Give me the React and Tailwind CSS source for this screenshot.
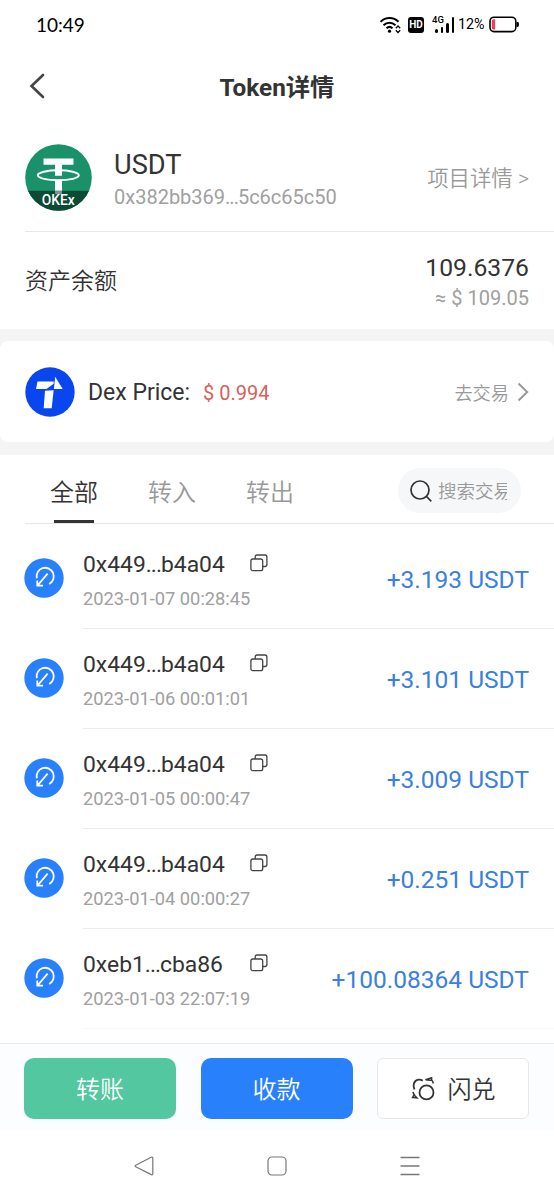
import clsx from 'clsx';

const tabs = ['全部', '转入', '转出'];

const transactions = [
  { hash: ['0x449', 'b4a04'], time: '2023-01-07 00:28:45', amount: '+3.193 USDT' },
  { hash: ['0x449', 'b4a04'], time: '2023-01-06 00:01:01', amount: '+3.101 USDT' },
  { hash: ['0x449', 'b4a04'], time: '2023-01-05 00:00:47', amount: '+3.009 USDT' },
  { hash: ['0x449', 'b4a04'], time: '2023-01-04 00:00:27', amount: '+0.251 USDT' },
  { hash: ['0xeb1', 'cba86'], time: '2023-01-03 22:07:19', amount: '+100.08364 USDT' },
];

function StatusBar() {
  return (
    <div className="flex h-[50px] items-center justify-between pl-9 pr-[35px] text-black">
      <span className="font-[Lato] text-[19px] leading-6 -mt-px">10:49</span>
      <div className="-mt-px flex items-center">
        {/* Wifi */}
        <svg className="-ml-0.5" width="21" height="18" viewBox="0 0 21 18" fill="none" stroke="currentColor" strokeWidth="2">
          <path d="M.5 5.8C5.500.8 13.500.8 18.500 5.800" />
          <path d="M3.500 9.200C7 5.800 12 5.800 15.500 9.200" />
          <path d="M6.500 12.300C8.300 10.600 10.700 10.600 12.500 12.300" />
          <circle cx="9.5" cy="15.2" r="1.6" fill="currentColor" stroke="none" />
          <path d="M15.800 12.200L18 9.900l2.200 2.300M15.800 14.200L18 16.500l2.200-2.300" strokeWidth="1.300" />
        </svg>
        <span className="ml-[7px] flex h-4 w-4 items-center justify-center rounded-[3px] bg-black font-[Roboto] text-[10px] font-bold text-white">
          HD
        </span>
        {/* Signal */}
        <div className="relative ml-2 h-[18px] w-[24px]">
          <span className="absolute -top-px left-0 font-[Roboto] text-[9.5px] font-medium leading-[10px]">4G</span>
          <div className="flex h-full items-end gap-[3px] pb-px pl-[3px]">
            <i className="h-1 w-[2.5px] rounded-full bg-black" />
            <i className="h-[6px] w-[2.5px] rounded-full bg-black" />
            <i className="h-[10px] w-[2.5px] rounded-full bg-black" />
            <i className="h-[16px] w-[2.5px] rounded-full bg-black" />
          </div>
        </div>
        <span className="ml-[2px] w-[27px] whitespace-nowrap font-[Roboto] text-[14.3px]">12%</span>
        {/* Battery */}
        <svg className="ml-1" width="30" height="17" viewBox="0 0 30 17" fill="none">
          <rect x="1" y="1.2" width="25.8" height="14.4" rx="4" stroke="#000" strokeWidth="1.6" />
          <path d="M27.500 6h1a1.400 1.400 0 0 1 1.400 1.400v2.200A1.400 1.400 0 0 1 28.500 11h-1z" fill="#000" />
          <path d="M6.200 3.200v10.400H5C3.500 13.600 2.800 12.600 2.800 11.400V5.400C2.800 4.200 3.500 3.200 5 3.200z" fill="#e5405c" />
        </svg>
      </div>
    </div>
  );
}

function TetherLogo() {
  return (
    <svg className="-mt-px" width="67" height="67" viewBox="0 0 67 67">
      <defs>
        <clipPath id="coin">
          <circle cx="33.500" cy="33.500" r="33.300" />
        </clipPath>
      </defs>
      <g clipPath="url(#coin)">
        <rect width="67" height="67" fill="#199269" />
        <path d="M18.500 14.500h30v6.300h-11.500v29h-7v-29H18.500z" fill="#fff" />
        <path d="M30 31.500h7v5h-7z" fill="#199269" />
        <ellipse cx="33.300" cy="31.300" rx="20.500" ry="5" fill="none" stroke="#fff" strokeWidth="1.900" />
        <path d="M30 20h7v11.500h-7z" fill="#fff" />
        <rect y="46.800" width="67" height="21" fill="#0d4a36" />
        <path d="M30 46.800h7v3.500h-7z" fill="#78988c" />
        <text x="33.300" y="60.800" textAnchor="middle" fill="#fff" fontFamily="Roboto" fontSize="14" fontWeight="500" textLength="33" lengthAdjust="spacingAndGlyphs">
          OKEx
        </text>
      </g>
    </svg>
  );
}

function DexLogo() {
  return (
    <svg width="50" height="50" viewBox="0 0 50 50">
      <circle cx="25" cy="25" r="24.700" fill="#0a46f0" />
      <g fill="#fff">
        <path d="M12.500 14.500h16.200v2.300L21.500 21.900H11z" />
        <path d="M30.200 9.700l7.500 12.200h-8.800z" />
        <path d="M20 23.800l8.600-.6-1.900 18H18.700z" />
      </g>
    </svg>
  );
}

function CopyIcon() {
  return (
    <svg width="18" height="18" viewBox="0 0 18 18" fill="none" stroke="#444" strokeWidth="1.300">
      <rect x="0.900" y="5" width="11.800" height="11.700" rx="2" />
      <path d="M5.200 5V3a2 2 0 0 1 2-2h7.700a2 2 0 0 1 2 2v7.500a2 2 0 0 1-2 2h-2.200" />
    </svg>
  );
}

function IncomingIcon() {
  return (
    <svg width="40" height="40" viewBox="0 0 40 40" fill="none" stroke="#fff" strokeWidth="1.800">
      <circle cx="20" cy="20" r="19.700" fill="#2880fb" stroke="none" />
      <path d="M12.800 20.300A8.600 8.600 0 1 1 25.200 26" />
      <path d="M23.600 15.700L14 27M13.300 22.500v5.200h5.700" />
    </svg>
  );
}

function SwapIcon() {
  return (
    <svg width="24" height="24" viewBox="0 0 24 24" fill="none" stroke="#333" strokeWidth="1.800">
      <circle cx="15.500" cy="15.400" r="7" />
      <path d="M3.500 12.500C1.200 8.500 3 3.300 7.500 2.700c1.700-.2 3 .2 4.200 1" />
      <path d="M14.500 2.800L20.600.8v2.700zM20.500 2.800c1 .9 1.500 2 1.800 3.700" strokeWidth="1.500" />
      <path d="M2 14.800c.3 1.600.9 2.700 1.800 3.600M1.500 20.600l4.500.3-3-3z" strokeWidth="1.500" />
    </svg>
  );
}

function ShortHash({ start, end }) {
  return (
    <>
      {start}
      <span className="tracking-[-1px]">...</span>
      {end}
    </>
  );
}

function Transaction({ hash, time, amount, last }) {
  return (
    <li className="flex h-[100px] pl-6">
      <div className="flex items-center pb-0.5">
        <IncomingIcon />
      </div>
      <div className={clsx('ml-[19px] flex flex-1 items-center justify-between border-b pr-[25px]', last ? 'border-[#f8f8f8]' : 'border-[#ececec]')}>
        <div className="pt-1">
          <div className="flex items-center">
            <span className="w-[142px] whitespace-nowrap text-[22.9px] leading-[30px] text-[#333]">
              <ShortHash start={hash[0]} end={hash[1]} />
            </span>
            <span className="-mt-[5px] ml-[25px]">
              <CopyIcon />
            </span>
          </div>
          <div className="mt-[7px] text-[18.3px] leading-6 text-[#a0a0a0]">{time}</div>
        </div>
        <span className="mt-[3px] text-[24.5px] text-[#3a80e0]">{amount}</span>
      </div>
    </li>
  );
}

export default function App() {
  return (
    <div className="flex h-[1200px] w-[554px] flex-col overflow-hidden bg-white font-[Roboto,'Noto_Sans_CJK_SC',sans-serif] text-[#333]">
      <StatusBar />

      {/* Header */}
      <header className="flex h-[74px] items-center pl-[29px] pr-[45px]">
        <svg className="-mt-0.5" width="16" height="26" viewBox="0 0 16 26" fill="none" stroke="#444" strokeWidth="2.600" strokeLinecap="round">
          <path d="M14 2L2.500 13 14 24" />
        </svg>
        <h1 className="mt-0.5 flex-1 text-center text-[24.3px] font-bold">Token详情</h1>
      </header>

      {/* Token */}
      <section className="ml-[25px] flex h-[108px] items-center border-b border-[#e8e8e8] pr-[25px]">
        <TetherLogo />
        <div className="ml-[22px] flex-1 pt-[7px]">
          <div className="text-[27.2px] leading-8">USDT</div>
          <div className="text-[20px] leading-8 text-[#a0a0a0]">
            <ShortHash start="0x382bb369" end="5c6c65c50" />
          </div>
        </div>
        <span className="mt-[3px] text-[21.4px] font-[350] text-[#999]">项目详情 &gt;</span>
      </section>

      {/* Balance */}
      <section className="flex h-[97px] items-center justify-between px-[25px]">
        <span className="mt-[4px] text-[23px] font-[350]">资产余额</span>
        <div className="pt-0.5 text-right">
          <div className="text-[24.7px] leading-8">109.6376</div>
          <div className="text-[20px] leading-7 text-[#a0a0a0]">≈ $ 109.05</div>
        </div>
      </section>

      {/* Dex price */}
      <div className="bg-[#f4f4f4] pb-[13px] pt-3">
        <section className="flex h-[101px] items-center rounded-lg bg-white px-[25px]">
          <DexLogo />
          <span className="ml-[13px] mt-[4px] text-[23px]">Dex Price:</span>
          <span className="ml-[13px] mt-0.5 flex-1 text-[20px] text-[#d8615a]">$ 0.994</span>
          <span className="mt-[4px] text-[18.2px] font-[350] text-[#999]">去交易</span>
          <svg className="ml-2" width="12" height="20" viewBox="0 0 12 20" fill="none" stroke="#999" strokeWidth="2">
            <path d="M1.500 1.500L10.200 10 1.500 18.500" />
          </svg>
        </section>
      </div>

      {/* Tabs */}
      <div className="ml-[25px] flex h-[69px] items-stretch justify-between border-b border-[#e6e6e6] pr-[33px]">
        <div className="flex gap-[50px] pl-[25px]">
          {tabs.map((tab, i) => (
            <button key={tab} className={clsx('flex w-12 flex-col items-center justify-end whitespace-nowrap text-[24px] font-[350] leading-9', i === 0 ? 'text-[#333]' : 'text-[#999]')}>
              {tab}
              <i className={clsx('mt-[9px] h-[3px] w-10', i === 0 && 'bg-[#333]')} />
            </button>
          ))}
        </div>
        <div className="mt-[13px] flex h-[45px] w-[123px] items-center rounded-full bg-[#f6f7f9] pl-3">
          <svg width="22" height="22" viewBox="0 0 22 22" fill="none" stroke="#333" strokeWidth="1.700">
            <circle cx="10" cy="10" r="9" />
            <path d="M16.500 16.500l4.800 4.800" />
          </svg>
          <span className="ml-1.5 mt-[5px] w-[69px] overflow-hidden whitespace-nowrap text-[18.5px] font-[350] text-[#999]">搜索交易</span>
        </div>
      </div>

      {/* Transactions */}
      <ul className="h-[519px] pt-[5px]">
        {transactions.map((tx, i) => (
          <Transaction key={tx.time} {...tx} last={i === transactions.length - 1} />
        ))}
      </ul>

      {/* Actions */}
      <div className="flex h-[88px] justify-between border-t border-[#e7ebee] bg-[#fbfdff] pl-6 pr-[25px] pt-[14px] text-[24px] font-[350]">
        <button className="h-[61px] w-[152px] rounded-[10px] bg-[#52c7a0] pt-0.5 text-white">转账</button>
        <button className="h-[61px] w-[152px] rounded-[10px] bg-[#2880fb] pt-0.5 text-white">收款</button>
        <button className="flex h-[61px] w-[152px] items-center justify-center gap-[13px] rounded-md border border-[#e6e8eb] bg-white">
          <SwapIcon />
          <span className="mt-0.5">闪兑</span>
        </button>
      </div>

      {/* System navigation */}
      <nav className="flex flex-1 items-center justify-center gap-[113px]">
        <svg width="20" height="20" viewBox="0 0 20 20" fill="none" stroke="#777" strokeWidth="1.200" strokeLinejoin="round">
          <path d="M17.200 1.200Q18.800.6 18.800 2.200v15.600q0 1.500-1.500.8L1.700 10.800Q.6 10 1.700 9.200z" />
        </svg>
        <svg width="20" height="20" viewBox="0 0 20 20" fill="none" stroke="#777" strokeWidth="1.200">
          <rect x="1" y="1" width="18" height="18" rx="4" />
        </svg>
        <svg width="20" height="20" viewBox="0 0 20 20" fill="none" stroke="#777" strokeWidth="1.300">
          <path d="M.5 1.500h19M.5 10h19M.5 18.500h19" />
        </svg>
      </nav>
    </div>
  );
}
